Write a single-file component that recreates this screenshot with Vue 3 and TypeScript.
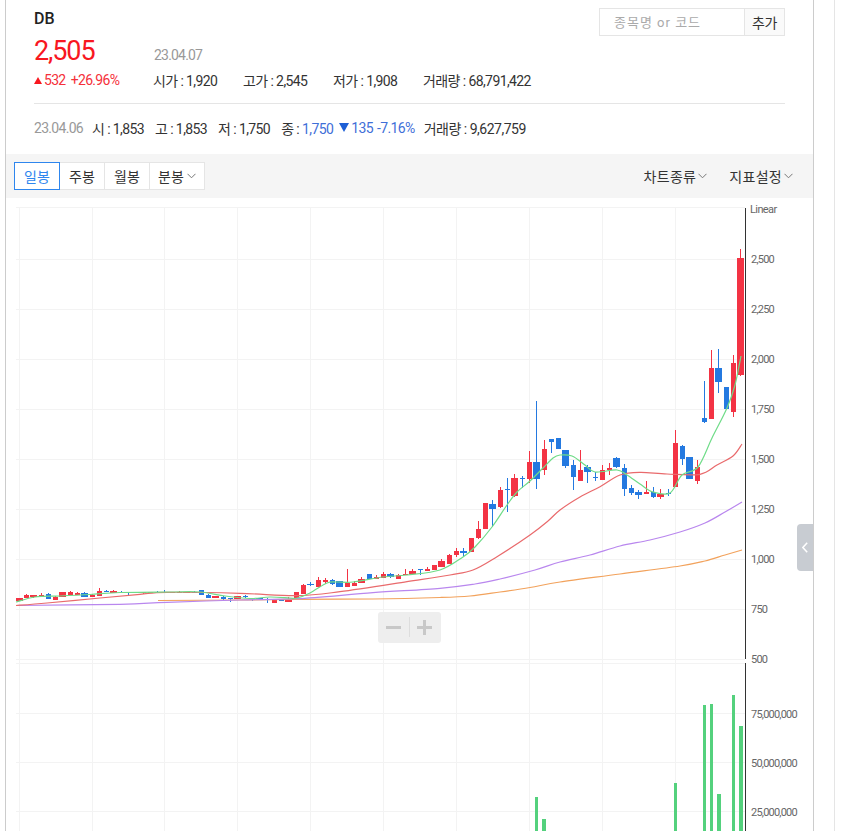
<script setup lang="ts">
type Candle = [number, number, number, number, number, 'r' | 'b']

const raw: Candle[] = [
  [19, 598, 601, 598, 601, 'r'], [26, 595, 598, 594, 598, 'r'], [33, 595, 597, 595, 598, 'r'], [41, 595, 597, 593, 597, 'r'],
  [48, 594, 599, 593, 599, 'b'], [55, 597, 600, 596, 600, 'r'], [62, 592, 597, 592, 597, 'r'], [70, 592, 595, 591, 595, 'r'],
  [77, 593, 595, 592, 595, 'r'], [84, 593, 597, 592, 597, 'b'], [92, 595, 597, 594, 597, 'r'], [99, 591, 596, 588, 596, 'r'],
  [106, 591, 592, 590, 592, 'b'], [113, 591, 593, 590, 593, 'r'], [121, 592, 592, 591, 593, 'b'], [128, 592, 593, 592, 595, 'b'],
  [135, 592, 593, 592, 593, 'r'], [143, 592, 593, 592, 594, 'r'], [150, 592, 593, 592, 593, 'r'], [157, 592, 593, 591, 593, 'b'],
  [164, 592, 593, 590, 593, 'b'], [172, 592, 593, 592, 593, 'r'], [179, 592, 593, 591, 593, 'r'], [186, 592, 593, 592, 593, 'r'],
  [194, 592, 592, 591, 593, 'b'], [201, 590, 595, 590, 595, 'b'], [208, 595, 598, 594, 598, 'b'], [215, 596, 598, 596, 598, 'r'],
  [223, 597, 599, 596, 601, 'b'], [230, 598, 599, 598, 602, 'b'], [237, 596, 599, 596, 599, 'r'], [245, 596, 597, 595, 598, 'b'],
  [252, 598, 599, 598, 601, 'b'], [259, 598, 599, 598, 600, 'b'], [267, 599, 600, 598, 603, 'b'], [274, 599, 603, 599, 603, 'r'],
  [281, 600, 601, 600, 601, 'b'], [288, 599, 602, 597, 602, 'r'], [296, 592, 598, 592, 598, 'r'], [303, 585, 594, 584, 594, 'r'],
  [310, 584, 585, 582, 586, 'b'], [318, 580, 587, 577, 587, 'r'], [325, 580, 582, 578, 584, 'r'], [332, 580, 584, 579, 585, 'b'],
  [339, 581, 587, 581, 587, 'b'], [347, 583, 587, 569, 587, 'r'], [354, 583, 586, 581, 586, 'r'], [361, 579, 583, 577, 583, 'r'],
  [369, 574, 579, 574, 579, 'b'], [376, 577, 579, 575, 579, 'r'], [383, 574, 578, 572, 578, 'r'], [390, 574, 577, 573, 578, 'b'],
  [398, 575, 579, 574, 579, 'r'], [405, 574, 575, 569, 575, 'r'], [412, 571, 574, 569, 574, 'r'], [420, 569, 570, 569, 575, 'b'],
  [427, 569, 571, 567, 571, 'r'], [434, 565, 570, 565, 570, 'r'], [441, 561, 567, 559, 567, 'r'], [449, 555, 564, 554, 564, 'r'],
  [456, 551, 555, 548, 557, 'r'], [463, 551, 553, 548, 557, 'b'], [471, 538, 552, 538, 552, 'r'], [478, 529, 538, 521, 539, 'r'],
  [485, 503, 529, 503, 529, 'r'], [492, 504, 509, 500, 527, 'b'], [500, 490, 507, 487, 508, 'r'], [507, 489, 490, 478, 512, 'b'],
  [514, 478, 496, 474, 497, 'r'], [522, 478, 479, 476, 488, 'b'], [529, 462, 479, 451, 483, 'r'], [536, 462, 479, 401, 489, 'b'],
  [544, 449, 470, 440, 475, 'r'], [551, 439, 442, 439, 453, 'b'], [558, 438, 449, 438, 449, 'b'], [565, 450, 466, 450, 468, 'b'],
  [573, 465, 477, 460, 490, 'b'], [580, 470, 481, 450, 481, 'r'], [587, 467, 472, 465, 483, 'b'], [595, 477, 478, 472, 481, 'b'],
  [602, 470, 480, 465, 480, 'r'], [609, 468, 470, 463, 475, 'r'], [616, 458, 467, 457, 468, 'b'], [624, 468, 489, 464, 496, 'b'],
  [631, 488, 493, 485, 495, 'b'], [638, 492, 495, 490, 499, 'b'], [646, 492, 494, 481, 494, 'r'], [653, 492, 497, 487, 498, 'b'],
  [660, 494, 497, 489, 499, 'r'], [668, 493, 494, 489, 496, 'b'], [675, 443, 487, 430, 487, 'r'], [682, 446, 459, 445, 465, 'b'],
  [689, 457, 479, 457, 479, 'b'], [697, 467, 481, 460, 484, 'r'], [704, 418, 422, 381, 423, 'b'], [711, 368, 419, 350, 419, 'r'],
  [718, 368, 382, 349, 393, 'b'], [726, 387, 409, 387, 409, 'b'], [733, 363, 412, 355, 417, 'r'], [740, 258, 375, 249, 376, 'r'],
]

const candles = raw.map((c, i) => {
  const next = raw[i + 1]
  const wide = !next || i === 0 || next[0] - c[0] >= 8
  const w = wide ? 7 : 5
  return {
    x: c[0],
    bodyX: c[0] - (wide ? 3 : 2),
    w,
    top: c[1],
    h: Math.max(1, c[2] - c[1]),
    wt: c[3],
    wh: Math.max(1, c[4] - c[3]),
    fill: c[5] === 'r' ? '#f33344' : '#2479e0',
  }
})

function smooth(src: string): string {
  const p = src.split(' ').map((s) => s.split(',').map(Number))
  let d = `M${p[0][0]} ${p[0][1]}`
  for (let i = 0; i < p.length - 1; i++) {
    const a = p[Math.max(0, i - 1)]
    const b = p[i]
    const c = p[i + 1]
    const e = p[Math.min(p.length - 1, i + 2)]
    const c1x = b[0] + (c[0] - a[0]) / 6
    const c1y = b[1] + (c[1] - a[1]) / 6
    const c2x = c[0] - (e[0] - b[0]) / 6
    const c2y = c[1] - (e[1] - b[1]) / 6
    d += `C${c1x.toFixed(1)} ${c1y.toFixed(1)} ${c2x.toFixed(1)} ${c2y.toFixed(1)} ${c[0]} ${c[1]}`
  }
  return d
}

const maLines = [
  { color: '#f2a25c', pts: '158,600.5 240,600 297,599.4 373,599 440,597.5 470,596 500,592 530,587.5 560,582 620,574 680,566 705,561 725,555 742,550' },
  { color: '#b987ee', pts: '16,605.5 120,604.3 167,602.3 240,600 297,598.7 373,592.7 440,588.3 475,584 500,579 535,570 560,562 590,555 620,546 650,540 680,532 705,523 725,512 742,502' },
  { color: '#e96a6c', pts: '16,605.5 47,603 100,598 140,594.3 167,592.3 240,593.3 297,595.7 340,591.7 407,581.7 450,575 473,570 497,556.7 530,535 548,521 560,510 580,497 600,486.7 620,475 640,472.3 667,474 700,474.3 717,465 733,456 742,444' },
  { color: '#6fdc88', pts: '16,602 35,597 60,596 90,594.5 120,592.5 170,592 200,592 225,596 250,598.5 270,597 290,598 297,598 310,593 327,583 337,582 353,582 383,577 407,575 440,570 463,557 475,547 492,527 507,505 517,492 530,481 543,468 553,458 560,455 572,456 585,465 595,472 617,470 627,475 640,484 653,492 670,493 682,475 698,467 712,438 727,408 735,385 741,356' },
].map((m) => ({ color: m.color, d: smooth(m.pts) }))

const hGrid = [207, 259, 309, 359, 409, 459, 509, 559, 609, 659, 663, 713, 762, 811]
const vGrid = [19, 92, 164, 237, 310, 383, 456, 529, 602, 675]
const labels: [string, number][] = [
  ['2,500', 259], ['2,250', 309], ['2,000', 359], ['1,750', 409], ['1,500', 459], ['1,250', 509], ['1,000', 559], ['750', 609], ['500', 659],
  ['75,000,000', 714], ['50,000,000', 763], ['25,000,000', 812],
]
const volumes = [
  { x: 535, w: 3, y: 797 }, { x: 542, w: 4, y: 819 }, { x: 674, w: 3, y: 783 }, { x: 703, w: 3, y: 705 },
  { x: 710, w: 3, y: 704 }, { x: 717, w: 4, y: 794 }, { x: 732, w: 3, y: 695 }, { x: 739, w: 4, y: 726 },
]
const todayStats = [
  { label: '시가', value: '1,920' }, { label: '고가', value: '2,545' }, { label: '저가', value: '1,908' }, { label: '거래량', value: '68,791,422' },
]
const periods = ['일봉', '주봉', '월봉']
</script>

<template>
  <div class="page">
    <main class="panel">
      <header class="head">
        <div class="top">
          <div class="name">DB</div>
          <div class="search">
            <input class="search-input" placeholder="종목명 or 코드" />
            <button class="search-btn">추가</button>
          </div>
        </div>
        <div class="price-row">
          <span class="price">2,505</span>
          <span class="date">23.04.07</span>
        </div>
        <div class="stat-row">
          <span class="change"><i class="tri-up"></i>532 +26.96%</span>
          <div class="stats">
            <span v-for="s in todayStats" :key="s.label">{{ s.label }} : {{ s.value }}</span>
          </div>
        </div>
        <div class="prev-row">
          <span class="prev-date">23.04.06</span>
          <span>시 : 1,853</span>
          <span>고 : 1,853</span>
          <span>저 : 1,750</span>
          <span>종 : <b class="down">1,750</b></span>
          <span class="down delta"><i class="tri-down"></i>135 -7.16%</span>
          <span class="prev-vol">거래량 : 9,627,759</span>
        </div>
      </header>

      <nav class="toolbar">
        <div class="periods">
          <button v-for="(p, i) in periods" :key="p" class="period" :class="{ active: i === 0 }">{{ p }}</button>
          <button class="period minute">분봉
            <svg class="chev" width="9" height="6" viewBox="0 0 9 6"><path d="M.5.8 4.5 4.8 8.5.8" fill="none" stroke="#777" /></svg>
          </button>
        </div>
        <div class="menus">
          <span class="menu">차트종류<svg class="chev" width="9" height="6" viewBox="0 0 9 6"><path d="M.5.8 4.5 4.8 8.5.8" fill="none" stroke="#777" /></svg></span>
          <span class="menu">지표설정<svg class="chev" width="9" height="6" viewBox="0 0 9 6"><path d="M.5.8 4.5 4.8 8.5.8" fill="none" stroke="#777" /></svg></span>
        </div>
      </nav>

      <section class="chart">
        <svg class="plot" width="807" height="633" viewBox="6 198 807 633">
          <g shape-rendering="crispEdges">
            <rect v-for="y in hGrid" :key="'h' + y" x="16" :y="y" width="729" height="1" fill="#f3f3f3" />
            <rect v-for="x in vGrid" :key="'v' + x" :x="x" y="207" width="1" height="624" fill="#f3f3f3" />
            <rect x="745" y="208" width="1" height="451" fill="#333" />
            <rect x="745" y="663" width="1" height="168" fill="#333" />
            <rect v-for="v in volumes" :key="v.x" :x="v.x" :y="v.y" :width="v.w" :height="831 - v.y" fill="#54d17d" />
            <g v-for="c in candles" :key="c.x">
              <rect :x="c.x" :y="c.wt" width="1" :height="c.wh" :fill="c.fill" />
              <rect :x="c.bodyX" :y="c.top" :width="c.w" :height="c.h" :fill="c.fill" />
            </g>
          </g>
          <path v-for="m in maLines" :key="m.color" :d="m.d" fill="none" :stroke="m.color" stroke-width="1.2" />
          <text class="axis linear" x="750" y="213">Linear</text>
          <text v-for="l in labels" :key="l[0]" class="axis" x="751" :y="l[1] + 4">{{ l[0] }}</text>
        </svg>
        <div class="zoom">
          <span class="minus"></span>
          <span class="sep"></span>
          <span class="plus"></span>
        </div>
      </section>

      <div class="handle">
        <svg width="6" height="11" viewBox="0 0 6 11"><path d="M5.2.8.9 5.5l4.3 4.7" fill="none" stroke="#fff" stroke-width="1.5" /></svg>
      </div>
    </main>
    <aside class="side"></aside>
  </div>
</template>

<style scoped>
.page {
  display: flex;
  width: 851px;
  height: 831px;
  overflow: hidden;
  background: #fff;
  font-family: Roboto, "Noto Sans CJK KR", sans-serif;
  color: #333;
}
.panel {
  position: relative;
  flex: none;
  width: 807px;
  height: 831px;
  margin-left: 5px;
  border-left: 1px solid #ccc;
  border-right: 1px solid #ccc;
}
.side {
  flex: none;
  width: 17px;
  margin-left: 20px;
  border-left: 1px solid #e5e5e5;
}
.head {
  height: 154px;
  padding: 8px 28px 0;
  box-sizing: border-box;
  width: 807px;
}
.top {
  display: flex;
  justify-content: space-between;
  align-items: flex-start;
  height: 28px;
}
.name {
  font-size: 16px;
  line-height: 22px;
  font-weight: 500;
  color: #222;
}
.search {
  display: flex;
  height: 28px;
  box-sizing: border-box;
  border: 1px solid #e5e5e5;
}
.search-input {
  width: 145px;
  box-sizing: border-box;
  border: 0;
  border-right: 1px solid #e5e5e5;
  padding: 0 0 0 14px;
  margin: 0;
  outline: 0;
  font: 13px Roboto, "Noto Sans CJK KR", sans-serif;
  letter-spacing: 1px;
  background: #fff;
}
.search-input::placeholder {
  color: #aaa;
  opacity: 1;
}
.search-btn {
  width: 39px;
  padding: 0;
  border: 0;
  background: #fafafa;
  color: #333;
  font: 14px Roboto, "Noto Sans CJK KR", sans-serif;
  letter-spacing: -0.3px;
}
.price-row {
  display: flex;
  align-items: baseline;
  height: 32px;
  margin-top: -5px;
  padding-top: 4px;
  box-sizing: content-box;
}
.price {
  width: 120px;
  font-size: 27px;
  line-height: 32px;
  color: #f8171f;
  letter-spacing: -1.1px;
}
.date {
  font-size: 14px;
  color: #999;
  letter-spacing: -0.8px;
}
.stat-row {
  display: flex;
  align-items: center;
  height: 24px;
  margin-top: 1px;
  font-size: 14px;
  letter-spacing: -0.6px;
}
.change {
  display: flex;
  align-items: center;
  width: 120px;
  color: #f5303a;
  font-size: 14px;
  letter-spacing: -0.7px;
  word-spacing: 2.5px;
}
.tri-up,
.tri-down {
  display: inline-block;
  width: 0;
  height: 0;
  border-left: 4.5px solid transparent;
  border-right: 4.5px solid transparent;
}
.tri-up {
  border-bottom: 7px solid #f8171f;
  margin-right: 2px;
}
.tri-down {
  border-top: 9px solid #1d5fd6;
  border-left-width: 5.5px;
  border-right-width: 5.5px;
  margin-right: 2px;
}
.stats {
  display: flex;
  gap: 25.7px;
  margin-left: -1px;
}
.prev-row {
  display: flex;
  align-items: center;
  gap: 11px;
  height: 50px;
  margin-top: 11px;
  padding-bottom: 2px;
  box-sizing: border-box;
  border-top: 1px solid #e5e5e5;
  font-size: 14px;
  letter-spacing: -0.6px;
}
.prev-date {
  color: #999;
  margin-right: -2px;
  letter-spacing: -0.7px;
}
.down {
  color: #3f6fd8;
  font-weight: 400;
}
.delta {
  display: flex;
  align-items: center;
  margin-left: -5px;
  word-spacing: 1px;
  letter-spacing: -0.6px;
}
.prev-vol {
  margin-left: -2px;
  letter-spacing: -0.5px;
}
.toolbar {
  display: flex;
  justify-content: space-between;
  align-items: center;
  height: 44px;
  padding: 0 20px 0 8px;
  background: #f5f5f5;
}
.periods {
  display: flex;
}
.period {
  display: flex;
  align-items: center;
  justify-content: center;
  width: 46px;
  height: 28px;
  margin-left: -1px;
  padding: 0;
  border: 1px solid #e5e5e5;
  background: #fff;
  color: #333;
  font: 14px Roboto, "Noto Sans CJK KR", sans-serif;
}
.period:first-child {
  margin-left: 0;
}
.period.active {
  position: relative;
  z-index: 1;
  border-color: #2e86ee;
  color: #2e86ee;
}
.period.minute {
  width: 56px;
  gap: 3px;
}
.menus {
  display: flex;
  gap: 22px;
}
.menu {
  display: flex;
  align-items: center;
  gap: 2px;
  font-size: 14px;
  letter-spacing: 0.3px;
}
.chart {
  position: relative;
  height: 633px;
  overflow: hidden;
}
.plot {
  display: block;
}
.axis {
  font-size: 11px;
  letter-spacing: -0.8px;
  fill: #666;
  font-family: Roboto, sans-serif;
}
.axis.linear {
  letter-spacing: -0.6px;
}
.zoom {
  position: absolute;
  left: 372px;
  top: 414px;
  width: 63px;
  height: 31px;
  border-radius: 3px;
  background: #eee;
}
.minus,
.plus,
.sep {
  position: absolute;
  background: #c8c8c8;
}
.minus {
  left: 8px;
  top: 14px;
  width: 15px;
  height: 3px;
}
.sep {
  left: 31px;
  top: 5px;
  width: 1px;
  height: 20px;
  background: #ddd;
}
.plus {
  left: 39px;
  top: 14px;
  width: 15px;
  height: 3px;
}
.plus::after {
  content: "";
  position: absolute;
  left: 6px;
  top: -6px;
  width: 3px;
  height: 15px;
  background: #c8c8c8;
}
.handle {
  position: absolute;
  right: 0;
  top: 524px;
  display: flex;
  align-items: center;
  justify-content: center;
  width: 16px;
  height: 47px;
  border-radius: 4px 0 0 4px;
  background: #c8ccd2;
}
</style>

<style>
html,
body {
  margin: 0;
  overflow: hidden;
  background: #fff;
}
</style>
